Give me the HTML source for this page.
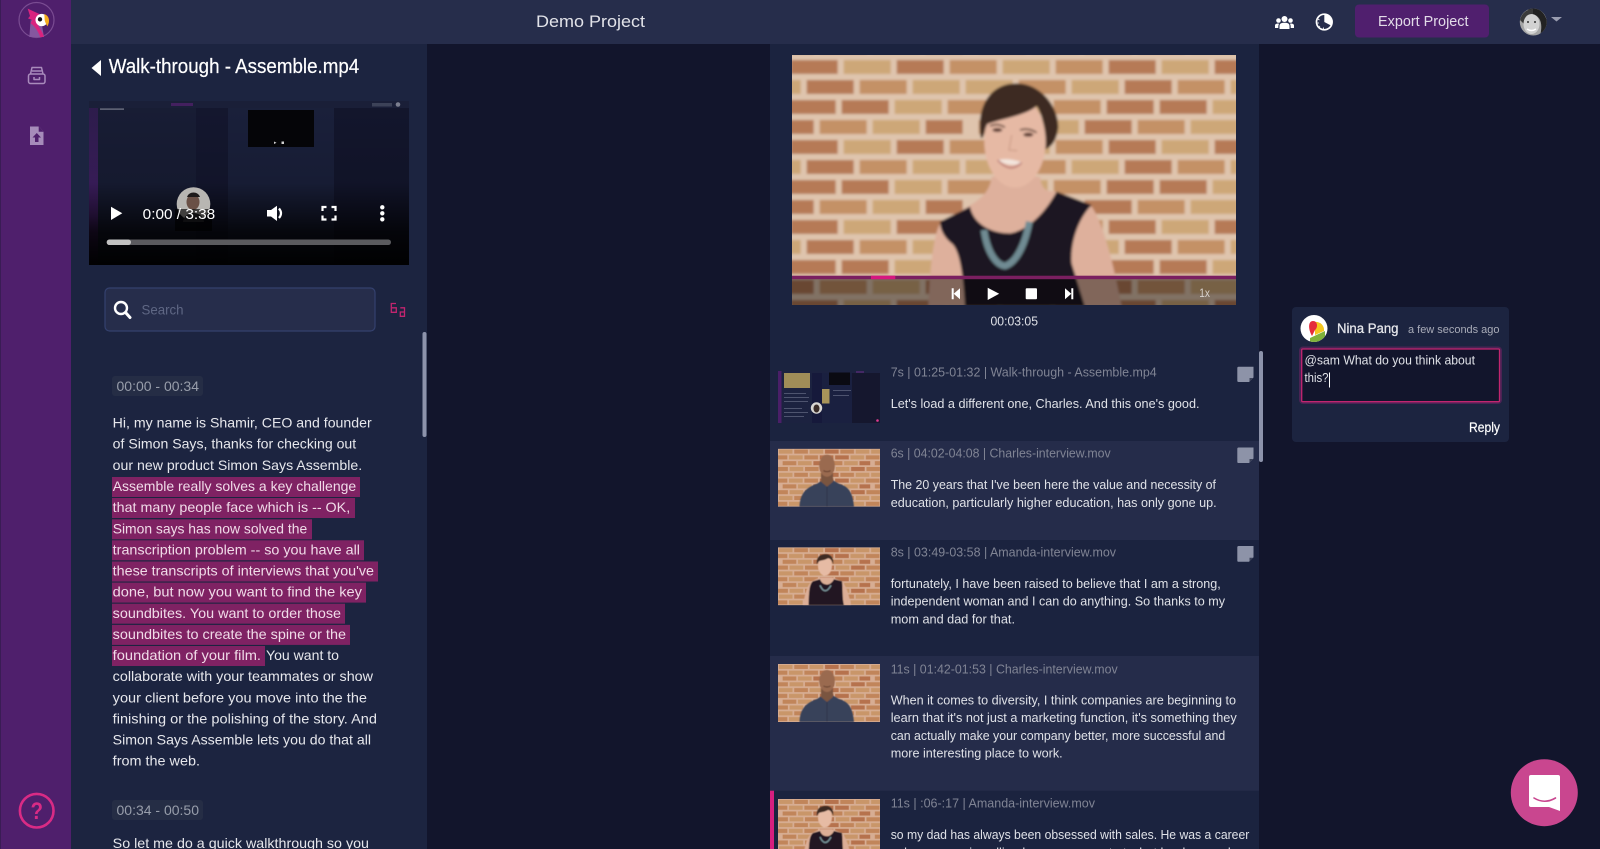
<!DOCTYPE html>
<html lang="en"><head><meta charset="utf-8"><title>Demo Project</title>
<style>
html,body{margin:0;padding:0;width:1600px;height:849px;overflow:hidden;background:#12152c}
svg{display:block}
text{font-family:"Liberation Sans",sans-serif;white-space:pre}
.t{font-size:14px;fill:#e6e7ec}
.h{font-size:14px;fill:#f0dbe8}
.m{font-size:13px;fill:#808494}
.c{font-size:13px;fill:#dfe1e7}
.p{font-size:14px;fill:#989eab}
</style></head><body>
<svg xmlns="http://www.w3.org/2000/svg" width="1600" height="849" viewBox="0 0 1600 849">
<defs>
<pattern id="b" width="318" height="80" patternUnits="userSpaceOnUse" patternTransform="translate(8.7 -3)">
<rect width="318" height="80" fill="#dfc4ad"/>
<g fill="#cda778">
<rect x="3" y="3" width="47" height="14"/><rect x="109" y="3" width="47" height="14"/><rect x="268" y="3" width="47" height="14"/>
<rect x="38" y="23" width="47" height="14"/><rect x="250" y="23" width="47" height="14"/>
<rect x="69" y="43" width="47" height="14"/><rect x="228" y="43" width="47" height="14"/>
<rect x="40" y="63" width="47" height="14"/><rect x="199" y="63" width="47" height="14"/>
</g>
<g fill="#c49166">
<rect x="56" y="3" width="47" height="14"/><rect x="215" y="3" width="47" height="14"/>
<rect x="91" y="23" width="47" height="14"/><rect x="-15" y="23" width="47" height="14"/><rect x="303" y="23" width="47" height="14"/>
<rect x="16" y="43" width="47" height="14"/><rect x="175" y="43" width="47" height="14"/>
<rect x="93" y="63" width="47" height="14"/><rect x="305" y="63" width="47" height="14"/><rect x="-13" y="63" width="47" height="14"/>
</g>
<g fill="#b67a56">
<rect x="162" y="3" width="47" height="14"/>
<rect x="144" y="23" width="47" height="14"/><rect x="197" y="23" width="47" height="14"/>
<rect x="122" y="43" width="47" height="14"/><rect x="281" y="43" width="47" height="14"/>
<rect x="146" y="63" width="47" height="14"/><rect x="252" y="63" width="47" height="14"/>
</g>
</pattern>
<pattern id="b2" href="#b" patternTransform="scale(.29)"/>
<filter id="bl" x="-5%" y="-5%" width="110%" height="110%"><feGaussianBlur stdDeviation="1.2"/></filter>
<filter id="bs"><feGaussianBlur stdDeviation="0.4"/></filter>
<linearGradient id="lg" x1="0" y1="0" x2="0" y2="1"><stop offset="0" stop-color="#000" stop-opacity="0"/><stop offset=".5" stop-color="#000" stop-opacity=".12"/><stop offset=".8" stop-color="#000" stop-opacity=".78"/><stop offset="1" stop-color="#000" stop-opacity=".97"/></linearGradient>
<linearGradient id="ps" x1="0" y1="0" x2="0" y2="1"><stop offset="0" stop-color="#2c1c4a"/><stop offset=".7" stop-color="#44206a"/><stop offset="1" stop-color="#2a1240"/></linearGradient>
<clipPath id="cv"><rect x="792" y="55" width="444" height="250"/></clipPath>
<clipPath id="ca"><circle cx="1533.3" cy="22" r="13.5"/></clipPath>
<clipPath id="cc"><circle cx="1314" cy="328.5" r="13.5"/></clipPath>
<clipPath id="ct"><rect x="89" y="101" width="320" height="164"/></clipPath>
<symbol id="charles" viewBox="0 0 102 58">
<rect width="102" height="58" fill="url(#b2)"/>
<rect width="102" height="58" fill="#b8562c" opacity=".2"/>
<g filter="url(#bs)">
<path d="M21.500 58C22 46 27 39 39 35L45 31H54L61 35C72 38 75 46 76 58Z" fill="#39425a"/>
<path d="M43 24H55V33L49 38 43 33Z" fill="#7a5440"/>
<ellipse cx="49" cy="17" rx="7.800" ry="11" fill="#9a6a50"/>
<path d="M45.500 22Q49 24 52.500 22" stroke="#5a3628" stroke-width=".9" fill="none"/>
<path d="M49 38V58" stroke="#2a3145" stroke-width=".7"/>
</g>
</symbol>
<symbol id="amanda" viewBox="0 0 102 58">
<rect width="102" height="58" fill="url(#b2)"/>
<rect width="102" height="58" fill="#b8562c" opacity=".2"/>
<g filter="url(#bs)">
<path d="M25 58C27 46 29 38 34 34L42 30H54L64 34C69 40 71 48 73 58Z" fill="#dcae96"/>
<path d="M30.500 58C31 46 31 37 35 34L42 32C44 38 52 40 56 32L64 34C65 42 64 50 66 58Z" fill="#211824"/>
<path d="M42 38Q47 49 53 38" stroke="#789298" stroke-width="1.500" fill="none"/>
<ellipse cx="47" cy="18" rx="7" ry="10.500" fill="#e6bba4"/>
<path d="M39 17C38 9 43 7 48 7 53 7 56 11 55 17 54 13 52 11 50 11 47 13 43 13 41 14Z" fill="#3d2a22"/>
</g>
</symbol>
</defs>

<!-- base -->
<rect width="1600" height="849" fill="#12152c"/>
<rect x="71" y="44" width="356" height="805" fill="#1c2440"/>
<rect x="770" y="44" width="489" height="805" fill="#1b233f"/>
<rect x="71" y="0" width="1529" height="44" fill="#262d4b"/>
<rect x="0" y="0" width="71" height="849" fill="#4f1f6c"/>
<rect x="0" y="0" width="1" height="849" fill="#3a1c55"/>

<!-- sidebar -->
<circle cx="36.5" cy="20" r="17.5" fill="none" stroke="#7a4c92" stroke-width="1.2"/>
<g transform="scale(.33333)">
<path d="M88 111L92 60 125 70 132 111Z" fill="#85579f"/>
<path d="M83 26L118 42 112 72C120 85 128 97 132 110L121 112C114 92 104 78 92 70L96 60 84 55 90 48Z" fill="#d9237f"/>
<circle cx="125" cy="60" r="18.500" fill="#fff"/>
<circle cx="120" cy="58" r="6.500" fill="#111"/>
<path d="M133 42C148 47 151 65 142 79 138 72 135 66 134 60Z" fill="#f6ac1e"/>
</g>
<g fill="none" stroke="#a98bbc" stroke-width="1.5" stroke-linejoin="round">
<path d="M30.5 74L32 67.5H41.5L43 74"/>
<path d="M32 71H41.5"/>
<rect x="28.5" y="74" width="16.500" height="9.500" rx="2"/>
<path d="M34 77V79.500H39.500V77"/>
</g>
<path d="M30 126.500H39L43.500 131.500V145H30Z" fill="#a68bba"/>
<path d="M39 126.500V131.500H43.500" fill="#4f1f6c" stroke="#4f1f6c" stroke-width=".6"/>
<path d="M36.800 133L41 137.500H38.500V142H35V137.500H32.500Z" fill="#4f1f6c"/>
<circle cx="36.700" cy="810.700" r="16.800" fill="none" stroke="#d92b85" stroke-width="2.600"/>
<text x="30.500" y="819" style="font-size:24px;font-weight:bold;fill:#d92b85" textLength="12.500" lengthAdjust="spacingAndGlyphs">?</text>

<!-- header -->
<text x="536" y="27" style="font-size:17px;fill:#e2e3e9" textLength="109" lengthAdjust="spacingAndGlyphs">Demo Project</text>
<g fill="#fff">
<circle cx="1284.500" cy="19" r="3"/><circle cx="1278.500" cy="20.500" r="2.300"/><circle cx="1290.500" cy="20.500" r="2.300"/>
<path d="M1279.500 29V26C1279.500 23.500 1281.500 22.800 1284.500 22.800S1289.500 23.500 1289.500 26V29Z"/>
<path d="M1275 28V25.500C1275 24 1276.500 23.500 1278.500 23.500L1279 24C1278.300 25 1278.300 26 1278.300 28Z"/>
<path d="M1294 28V25.500C1294 24 1292.500 23.500 1290.500 23.500L1290 24C1290.700 25 1290.700 26 1290.700 28Z"/>
</g>
<circle cx="1324.300" cy="22" r="7.800" fill="#262d4b" stroke="#fff" stroke-width="1.700"/>
<path d="M1324.300 22V14.500A7.500 7.500 0 0 1 1331 25.500Z" fill="#fff"/>
<g stroke="#fff" stroke-width=".8"><path d="M1318 19L1319.500 20M1317.500 23H1319M1319 27L1320 26M1323.500 29V27.500"/></g>
<rect x="1355" y="4.500" width="134" height="33" rx="4" fill="#501f6e"/>
<text x="1378" y="26" style="font-size:15px;fill:#e2dbe8" textLength="90.500" lengthAdjust="spacingAndGlyphs">Export Project</text>
<g clip-path="url(#ca)">
<rect x="1519" y="8" width="30" height="28" fill="#a5a5a5"/>
<path d="M1528 8C1540 6 1549 14 1549 36H1540C1543 24 1541 16 1532 14 1530 13 1528 11 1528 8Z" fill="#222"/>
<path d="M1520 20C1522 12 1528 9 1533 9L1533 14C1528 15 1525 18 1524 24Z" fill="#3a3a3a"/>
<ellipse cx="1531.500" cy="24" rx="8" ry="10" fill="#d2d2d2"/>
<path d="M1527 29Q1531.500 32 1536 29" stroke="#fff" stroke-width="1.500" fill="none"/>
<circle cx="1528" cy="22" r="1" fill="#333"/><circle cx="1535" cy="22" r="1" fill="#333"/>
</g>
<path d="M1551 17H1562L1556.500 21.500Z" fill="#9a9db0"/>

<!-- left title -->
<path d="M101 60V76L91.500 68Z" fill="#fff"/>
<text x="108.700" y="73" style="font-size:20px;fill:#fff;stroke:#fff;stroke-width:.2" textLength="250.500" lengthAdjust="spacingAndGlyphs">Walk-through - Assemble.mp4</text>

<!-- left video -->
<g clip-path="url(#ct)">
<rect x="89" y="101" width="320" height="164" fill="#181d35"/>
<rect x="89" y="101" width="9" height="164" fill="url(#ps)"/>
<rect x="196" y="108" width="32" height="157" fill="#14172f"/>
<rect x="228" y="108" width="106" height="157" fill="#1a203b"/>
<rect x="334" y="108" width="75" height="157" fill="#13162d"/>
<rect x="89" y="101" width="320" height="7" fill="#1a1f38"/>
<rect x="248" y="110" width="66" height="37" fill="#050508"/>
<path d="M274 141.500V144L276.500 142.800Z" fill="#ddd"/><rect x="281.500" y="141.500" width="2.500" height="2.500" fill="#ddd"/>
<rect x="171" y="103" width="22" height="3" fill="#43205f"/>
<rect x="372" y="103" width="20" height="3.500" fill="#3c4258"/>
<circle cx="398" cy="104.500" r="2.300" fill="#7c7f90"/>
<rect x="100" y="108.500" width="24" height="1.200" fill="#7c7f90"/>
<rect x="89" y="101" width="320" height="164" fill="url(#lg)"/>
<circle cx="193.500" cy="204" r="16.800" fill="#b8b6b2"/>
<ellipse cx="193" cy="202" rx="6.500" ry="8" fill="#6a5046"/>
<path d="M187 197C189 191 198 191 200 197Z" fill="#1e1a1a"/>
<path d="M183 222C184 210 203 210 204 222Z" fill="#2a2a2e"/>
<rect x="175" y="209" width="37" height="22" fill="#000" opacity=".65"/>
</g>
<path d="M111 206.700L122.300 213.300 111 220Z" fill="#fff"/>
<text x="142.700" y="219" style="font-size:15px;fill:#fff" textLength="72.500" lengthAdjust="spacingAndGlyphs">0:00 / 3:38</text>
<path d="M267 210H271L277 205.700V221L271 216.500H267Z" fill="#fff"/>
<path d="M279 208.500Q283 213.300 279 218" stroke="#fff" stroke-width="2.200" fill="none"/>
<path d="M322.500 211V207H326.500M331.500 207H335.500V211M335.500 215.500V219.500H331.500M326.500 219.500H322.500V215.500" stroke="#fff" stroke-width="2.200" fill="none"/>
<circle cx="382.300" cy="207.300" r="2.200" fill="#fff"/><circle cx="382.300" cy="213.300" r="2.200" fill="#fff"/><circle cx="382.300" cy="219.300" r="2.200" fill="#fff"/>
<rect x="106.700" y="239.500" width="284.300" height="5.500" rx="2.700" fill="#5b5b5f"/>
<rect x="106.700" y="239.500" width="24.300" height="5.500" rx="2.700" fill="#c2c2c2"/>

<!-- search -->
<rect x="105" y="288" width="270" height="43" rx="4.500" fill="#262d4b" stroke="#34416e" stroke-width="1.200"/>
<circle cx="121" cy="308" r="6" fill="none" stroke="#fff" stroke-width="2.400"/>
<path d="M125.500 312.500L130 317.500" stroke="#fff" stroke-width="3" stroke-linecap="round"/>
<text x="141.500" y="314.400" style="font-size:14px;fill:#5f6784" textLength="42" lengthAdjust="spacingAndGlyphs">Search</text>
<g fill="none" stroke="#c2256f" stroke-width="1.300">
<path d="M396 303.500H391.300V312.300H396.300V307.800H391.300"/>
<path d="M400.300 307.800H404.500V316.300H400.300V312H404.500"/>
</g>

<!-- transcript -->
<rect x="112" y="376" width="91" height="20" rx="3" fill="#252d45"/>
<text class="p" x="116.500" y="391" textLength="82.500" lengthAdjust="spacingAndGlyphs">00:00 - 00:34</text>
<g fill="#7f2263">
<rect x="112" y="477" width="248" height="20"/>
<rect x="112" y="498" width="243" height="20"/>
<rect x="112" y="519.300" width="200" height="20"/>
<rect x="112" y="540.300" width="252" height="20"/>
<rect x="112" y="561.500" width="266" height="20"/>
<rect x="112" y="582.600" width="254" height="20"/>
<rect x="112" y="603.700" width="233" height="20"/>
<rect x="112" y="624.900" width="238" height="20"/>
<rect x="112" y="646" width="153" height="20"/>
</g>
<g transform="translate(0 -.7)">
<text class="t" x="112.700" y="428.300" textLength="259" lengthAdjust="spacingAndGlyphs">Hi, my name is Shamir, CEO and founder</text>
<text class="t" x="112.700" y="449.400" textLength="243.500" lengthAdjust="spacingAndGlyphs">of Simon Says, thanks for checking out</text>
<text class="t" x="112.700" y="470.500" textLength="249.500" lengthAdjust="spacingAndGlyphs">our new product Simon Says Assemble.</text>
<text class="h" x="112.700" y="491.700" textLength="243.500" lengthAdjust="spacingAndGlyphs">Assemble really solves a key challenge</text>
<text class="h" x="112.700" y="512.800" textLength="237.500" lengthAdjust="spacingAndGlyphs">that many people face which is -- OK,</text>
<text class="h" x="112.700" y="534" textLength="194.500" lengthAdjust="spacingAndGlyphs">Simon says has now solved the</text>
<text class="h" x="112.700" y="555.100" textLength="247.300" lengthAdjust="spacingAndGlyphs">transcription problem -- so you have all</text>
<text class="h" x="112.700" y="576.200" textLength="261.300" lengthAdjust="spacingAndGlyphs">these transcripts of interviews that you've</text>
<text class="h" x="112.700" y="597.300" textLength="249.300" lengthAdjust="spacingAndGlyphs">done, but now you want to find the key</text>
<text class="h" x="112.700" y="618.500" textLength="228.300" lengthAdjust="spacingAndGlyphs">soundbites. You want to order those</text>
<text class="h" x="112.700" y="639.600" textLength="233.300" lengthAdjust="spacingAndGlyphs">soundbites to create the spine or the</text>
<text class="h" x="112.700" y="660.700" textLength="148.300" lengthAdjust="spacingAndGlyphs">foundation of your film.</text>
<text class="t" x="266" y="660.700" textLength="73" lengthAdjust="spacingAndGlyphs">You want to</text>
<text class="t" x="112.700" y="681.900" textLength="260.300" lengthAdjust="spacingAndGlyphs">collaborate with your teammates or show</text>
<text class="t" x="112.700" y="703" textLength="254.300" lengthAdjust="spacingAndGlyphs">your client before you move into the the</text>
<text class="t" x="112.700" y="724.100" textLength="264.300" lengthAdjust="spacingAndGlyphs">finishing or the polishing of the story. And</text>
<text class="t" x="112.700" y="745.200" textLength="258.300" lengthAdjust="spacingAndGlyphs">Simon Says Assemble lets you do that all</text>
<text class="t" x="112.700" y="766" textLength="87.300" lengthAdjust="spacingAndGlyphs">from the web.</text>
<text class="t" x="112.700" y="848.500" textLength="256.300" lengthAdjust="spacingAndGlyphs">So let me do a quick walkthrough so you</text>
</g>
<rect x="112" y="800" width="91" height="20" rx="3" fill="#252d45"/>
<text class="p" x="116.500" y="815" textLength="82.500" lengthAdjust="spacingAndGlyphs">00:34 - 00:50</text>
<rect x="422.500" y="332" width="4" height="105" rx="2" fill="#8d93ab"/>

<!-- main video -->
<g clip-path="url(#cv)">
<g filter="url(#bl)">
<rect x="780" y="45" width="470" height="270" fill="url(#b)"/>
<g transform="translate(770 50) scale(.33333)">
<path d="M475 770C480 650 490 560 510 520L610 460C640 440 660 420 665 380H810C815 420 830 425 860 425L965 470C1000 520 1030 640 1055 770Z" fill="#deb09c"/>
<path d="M510 515L600 470C610 520 660 550 720 550 780 540 830 480 860 425L965 465C930 500 900 570 905 640L945 770H585C580 680 570 600 545 580 525 565 510 540 510 515Z" fill="#1e1520"/>
<path d="M642 540C652 610 680 645 705 648 745 635 768 570 778 515" stroke="#6f8b93" stroke-width="20" fill="none"/>
<ellipse cx="735" cy="275" rx="92" ry="138" fill="#e6b9a4"/>
<path d="M632 262C618 170 660 100 740 100 812 100 866 170 865 232 860 272 845 290 826 298 832 250 815 190 800 168 770 195 700 205 652 222 642 240 642 272 632 262Z" fill="#3d2a22"/>
<path d="M660 228Q682 218 705 232M750 240Q775 232 800 248" stroke="#5a4034" stroke-width="5" fill="none"/>
<ellipse cx="682" cy="240" rx="15" ry="6" fill="#5c3b30"/>
<ellipse cx="775" cy="254" rx="15" ry="6" fill="#5c3b30"/>
<path d="M725 255L717 300 742 302" stroke="#cf9f8a" stroke-width="4" fill="none"/>
<path d="M683 330Q720 322 755 338 720 354 683 330Z" fill="#f3e6de"/>
<path d="M683 330Q720 372 755 338" stroke="#b87470" stroke-width="5" fill="none"/>
</g>
</g>
<rect x="792" y="279" width="445" height="26" fill="#000" opacity=".42"/>
<rect x="792" y="275.700" width="445" height="3.500" fill="#7a1f60"/>
<rect x="871" y="275.700" width="24.300" height="3.500" fill="#d6177f"/>
</g>
<path d="M951.700 288.300H953.700V299.300H951.700ZM960 288.300V299.300L953.700 293.800Z" fill="#fff"/>
<path d="M987.700 287.700L999.200 293.800 987.700 300Z" fill="#fff"/>
<rect x="1025.700" y="288.300" width="11.300" height="11" rx="1" fill="#fff"/>
<path d="M1071.300 288.300H1073.300V299.300H1071.300ZM1065 288.300V299.300L1071.300 293.800Z" fill="#fff"/>
<text x="1199.300" y="297" style="font-size:12px;fill:#d8d2cd" textLength="10.700" lengthAdjust="spacingAndGlyphs">1x</text>
<text class="c" x="990.500" y="325.700" textLength="47.500" lengthAdjust="spacingAndGlyphs">00:03:05</text>

<!-- rows -->
<rect x="770" y="441" width="489" height="99" fill="#252c4a"/>
<rect x="770" y="656" width="489" height="134.700" fill="#252c4a"/>
<rect x="770" y="790.700" width="4" height="58.300" fill="#d61f7f"/>

<!-- thumb 1 -->
<g>
<rect x="778" y="371" width="102" height="52" fill="#1c2240"/>
<rect x="778" y="371" width="3.500" height="52" fill="#4a1f68"/>
<rect x="784" y="373" width="26" height="15" fill="#a08d58"/>
<rect x="812" y="373" width="10" height="50" fill="#15183a" opacity=".8"/>
<rect x="822" y="373" width="30" height="50" fill="#1a2040"/>
<rect x="852" y="373" width="28" height="50" fill="#15172e"/>
<rect x="829" y="372.500" width="21" height="12.500" fill="#0a0a12"/>
<rect x="822" y="389" width="7.500" height="14.500" fill="#a8945a"/>
<g fill="#9aa0b5" opacity=".4"><rect x="784" y="393" width="22" height="1"/><rect x="784" y="397" width="25" height="1"/><rect x="784" y="401" width="24" height="1"/><rect x="784" y="408" width="18" height="1"/><rect x="784" y="412" width="24" height="1"/><rect x="784" y="416" width="20" height="1"/><rect x="833" y="390" width="18" height="1"/><rect x="833" y="395" width="16" height="1"/></g>
<circle cx="816.500" cy="408" r="5.700" fill="#d9d7d3"/>
<ellipse cx="816.500" cy="408.500" rx="3" ry="4" fill="#3a2c28"/>
<rect x="856" y="371.500" width="8" height="1" fill="#6b2f8a"/>
<circle cx="877.500" cy="420.500" r="1.300" fill="#e03a90"/>
</g>
<use href="#charles" x="778" y="448.700" width="102" height="58"/>
<use href="#amanda" x="778" y="547.300" width="102" height="58"/>
<use href="#charles" x="778" y="664" width="102" height="58"/>
<use href="#amanda" x="778" y="799" width="102" height="58"/>

<text class="m" x="890.700" y="376.700" textLength="266" lengthAdjust="spacingAndGlyphs">7s | 01:25-01:32 | Walk-through - Assemble.mp4</text>
<text class="c" x="890.700" y="408" textLength="308.800" lengthAdjust="spacingAndGlyphs">Let's load a different one, Charles. And this one's good.</text>
<text class="m" x="890.700" y="457.700" textLength="220" lengthAdjust="spacingAndGlyphs">6s | 04:02-04:08 | Charles-interview.mov</text>
<text class="c" x="890.700" y="489" textLength="325.300" lengthAdjust="spacingAndGlyphs">The 20 years that I've been here the value and necessity of</text>
<text class="c" x="890.700" y="507" textLength="326" lengthAdjust="spacingAndGlyphs">education, particularly higher education, has only gone up.</text>
<text class="m" x="890.700" y="556.700" textLength="225.300" lengthAdjust="spacingAndGlyphs">8s | 03:49-03:58 | Amanda-interview.mov</text>
<text class="c" x="890.700" y="588" textLength="330" lengthAdjust="spacingAndGlyphs">fortunately, I have been raised to believe that I am a strong,</text>
<text class="c" x="890.700" y="605.700" textLength="334.300" lengthAdjust="spacingAndGlyphs">independent woman and I can do anything. So thanks to my</text>
<text class="c" x="890.700" y="623.300" textLength="124.300" lengthAdjust="spacingAndGlyphs">mom and dad for that.</text>
<text class="m" x="890.700" y="673.300" textLength="227" lengthAdjust="spacingAndGlyphs">11s | 01:42-01:53 | Charles-interview.mov</text>
<text class="c" x="890.700" y="704.300" textLength="345.300" lengthAdjust="spacingAndGlyphs">When it comes to diversity, I think companies are beginning to</text>
<text class="c" x="890.700" y="722" textLength="346" lengthAdjust="spacingAndGlyphs">learn that it's not just a marketing function, it's something they</text>
<text class="c" x="890.700" y="740" textLength="334.600" lengthAdjust="spacingAndGlyphs">can actually make your company better, more successful and</text>
<text class="c" x="890.700" y="757.700" textLength="172" lengthAdjust="spacingAndGlyphs">more interesting place to work.</text>
<text class="m" x="890.700" y="807.700" textLength="204.300" lengthAdjust="spacingAndGlyphs">11s | :06-:17 | Amanda-interview.mov</text>
<text class="c" x="890.700" y="839" textLength="358.600" lengthAdjust="spacingAndGlyphs">so my dad has always been obsessed with sales. He was a career</text>
<text class="c" x="890.700" y="857" textLength="340" lengthAdjust="spacingAndGlyphs">salesman, so in selling he was so great at what he does and</text>

<!-- sticky icons -->
<g fill="#8d93a8">
<path d="M1237.300 368Q1237.300 366.700 1238.600 366.700H1253.500V377.500L1249 382H1238.600Q1237.300 382 1237.300 380.700Z"/>
<path d="M1237.300 448.800Q1237.300 447.500 1238.600 447.500H1253.500V458.500L1249 463H1238.600Q1237.300 463 1237.300 461.700Z"/>
<path d="M1237.300 547.300Q1237.300 546 1238.600 546H1253.500V557.300L1249 561.800H1238.600Q1237.300 561.800 1237.300 560.500Z"/>
</g>
<g fill="#3a4058"><path d="M1253 378L1249.500 378V381.500Z"/><path d="M1253 459L1249.500 459V462.500Z"/><path d="M1253 557.800L1249.500 557.800V561.300Z"/></g>
<rect x="1259" y="351" width="4" height="111" rx="2" fill="#8d93ab"/>

<!-- comment -->
<rect x="1292" y="307" width="217" height="135" rx="4" fill="#1c2440"/>
<circle cx="1314" cy="328.500" r="13.500" fill="#fff"/>
<g clip-path="url(#cc)">
<path d="M1310 338L1325 331V342H1310Z" fill="#7fb23a"/>
<path d="M1315 322A8 8 0 0 1 1324 331L1315 335Z" fill="#f4c61f"/>
<path d="M1312 336C1308 329 1308 321 1313 321 1318 321 1318 328 1315 330Z" fill="#e52b3c"/>
</g>
<text x="1337" y="333" style="font-size:13.500px;fill:#e7e8ec;stroke:#e7e8ec;stroke-width:.25" textLength="61.500" lengthAdjust="spacingAndGlyphs">Nina Pang</text>
<text x="1408" y="333" style="font-size:11px;fill:#a9acb8" textLength="91.500" lengthAdjust="spacingAndGlyphs">a few seconds ago</text>
<rect x="1299" y="346.500" width="203" height="57.500" rx="4" fill="#4a2354"/>
<rect x="1301.700" y="349" width="197.800" height="52.700" rx="1" fill="#12152c" stroke="#c2256f" stroke-width="1.300"/>
<text class="c" x="1304.500" y="364.500" textLength="170.500" lengthAdjust="spacingAndGlyphs">@sam What do you think about</text>
<text class="c" x="1304.500" y="382" textLength="24" lengthAdjust="spacingAndGlyphs">this?</text>
<rect x="1329" y="372.500" width="1" height="15" fill="#fff"/>
<text x="1469" y="432" style="font-size:13.500px;fill:#fff;stroke:#fff;stroke-width:.2" textLength="31" lengthAdjust="spacingAndGlyphs">Reply</text>

<!-- chat bubble -->
<circle cx="1544.300" cy="792.700" r="33.500" fill="#c9468f"/>
<path d="M1531 775H1558A2 2 0 0 1 1560 777V811L1549 807H1531A2 2 0 0 1 1529 805V777A2 2 0 0 1 1531 775Z" fill="#fff"/>
<path d="M1534 798Q1544.500 804.500 1555.500 798" stroke="#c9468f" stroke-width="1.600" fill="none" stroke-linecap="round"/>
</svg>
</body></html>
